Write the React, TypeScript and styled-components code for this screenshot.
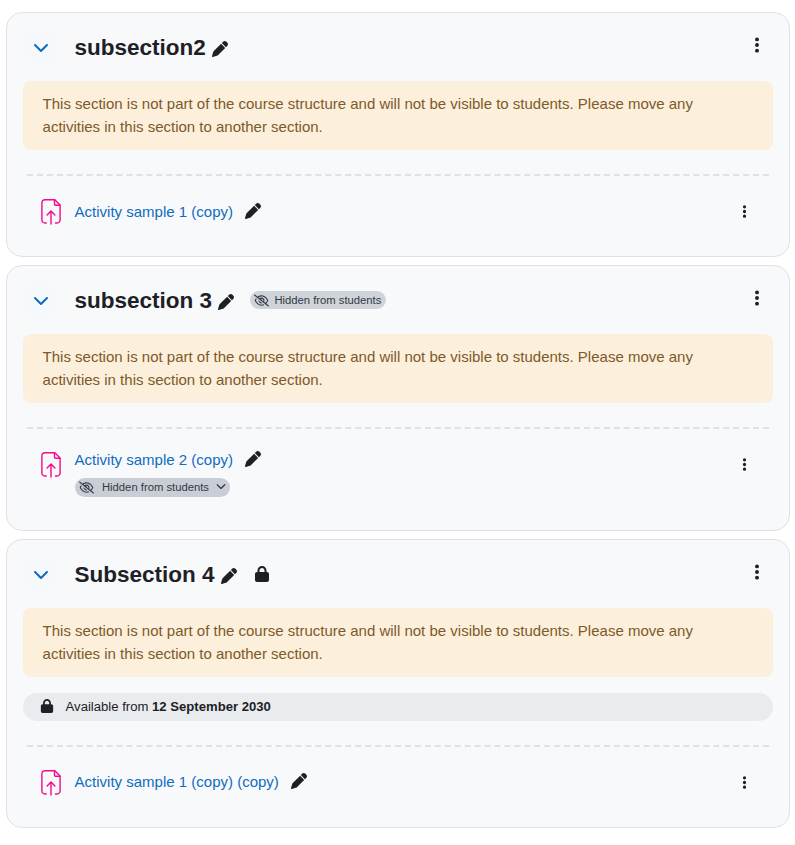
import React from "react";
import styled, { createGlobalStyle } from "styled-components";
import {
  FaChevronDown,
  FaEllipsisVertical,
  FaLock,
  FaPen,
  FaRegEyeSlash,
} from "react-icons/fa6";

const GlobalStyle = createGlobalStyle`
  *, *::before, *::after { box-sizing: border-box; }
  body {
    margin: 0;
    background: #fff;
    color: #1d2125;
    font: 15px/1.5 "Liberation Sans", Arial, sans-serif;
  }
  svg { display: block; flex: none; }
`;

const Page = styled.main`
  display: flex;
  flex-direction: column;
  gap: 8px;
  padding: 12px 5px 0 6px;
`;

const Card = styled.section<{ $height: number }>`
  height: ${(p) => p.$height}px;
  padding: 16px;
  border: 1px solid #dee2e6;
  border-radius: 16px;
  background: #f8f9fb;
`;

const Header = styled.header`
  display: flex;
  align-items: center;
  height: 36px;
`;

const Toggle = styled.button`
  display: flex;
  align-items: center;
  justify-content: center;
  width: 35px;
  height: 35px;
  padding: 0 0 1px;
  border: 0;
  border-radius: 50%;
  background: #f5f9fc;
  color: #0f6cbf;
`;

const Title = styled.h3`
  margin: 0 0 0 16.5px;
  font-size: 22.5px;
  font-weight: 700;
  line-height: 27px;
  white-space: nowrap;
`;

const EditButton = styled.button<{ $gap: number; $drop: number }>`
  display: flex;
  margin: ${(p) => p.$drop}px 0 0 ${(p) => p.$gap}px;
  padding: 0;
  border: 0;
  background: none;
  color: #1d2125;
`;

const MenuButton = styled.button<{ $right: number; $lift: number }>`
  display: flex;
  margin: 0 ${(p) => p.$right}px ${(p) => p.$lift}px auto;
  padding: 0;
  border: 0;
  background: none;
  color: #1d2125;
`;

const LockMark = styled.span`
  display: flex;
  margin: 0 0 0 17px;
`;

const Badge = styled.span`
  display: flex;
  align-items: center;
  gap: 5px;
  width: 136px;
  height: 18px;
  margin-left: 15.6px;
  padding-left: 4.8px;
  border-radius: 9px;
  background: #ced4da;
  color: #343a40;
  font-size: 11.25px;
  line-height: 18px;
  white-space: nowrap;
`;

const VisibilityButton = styled.button`
  display: flex;
  align-items: center;
  width: 155px;
  height: 19px;
  padding: 0 4px 0 4.4px;
  border: 0;
  border-radius: 10px;
  background: #c8cdd6;
  color: #343a40;
  font: 11.25px/19px "Liberation Sans", Arial, sans-serif;
  white-space: nowrap;
`;

const VisibilityLabel = styled.span`
  margin: 0 7px 0 8px;
`;

const VisibilityCaret = styled(FaChevronDown)`
  margin-bottom: 3px;
`;

const Warning = styled.p`
  margin: 16px 0 0;
  padding: 12px 19.6px;
  border-radius: 8px;
  background: #fcefdc;
  color: #7d5a29;
`;

const Availability = styled.div`
  display: flex;
  align-items: center;
  gap: 11.8px;
  height: 28px;
  margin-top: 16px;
  padding-left: 16.8px;
  border-radius: 14px;
  background: #e9ecef;
  font-size: 13.125px;
`;

const AvailabilityLock = styled(FaLock)`
  margin-bottom: 2px;
`;

const Divider = styled.hr`
  height: 0;
  margin: 24px 4px 0;
  border: 0;
  border-top: 2px dashed #dee2e6;
`;

const Activity = styled.div`
  display: flex;
  align-items: flex-start;
  margin-top: 16px;
  padding: 0 25px 0 16px;
`;

const ActivityMark = styled.div`
  display: flex;
  align-items: center;
  height: 40px;
`;

const ActivityMenu = styled(ActivityMark)`
  margin-left: auto;
`;

const ActivityBody = styled.div<{ $top: number }>`
  display: flex;
  flex-direction: column;
  gap: 6px;
  padding-top: ${(p) => p.$top}px;
  margin-left: 11.6px;
`;

const NameRow = styled.div`
  display: flex;
  align-items: center;
  height: 23px;
`;

const ActivityLink = styled.a`
  color: #0f6cbf;
  text-decoration: none;
  white-space: nowrap;
`;

const AssignmentIcon = () => (
  <svg width="24" height="28" viewBox="0 0 24 28" fill="none" stroke="#f7088b" strokeWidth="1.4" strokeLinecap="round" strokeLinejoin="round">
    <path d="M7.2 25H5.9A3 3 0 0 1 2.9 22V4.7A3 3 0 0 1 5.9 1.7H15.8L21.1 6.9V22A3 3 0 0 1 18.1 25H16.5" />
    <path d="M15.5 1.9V6.1A1.2 1.2 0 0 0 16.7 7.3H20.8M12 26V13.2M8.1 16.9L12 13L15.9 16.9" />
  </svg>
);

type SectionProps = {
  title: string;
  activity: string;
  height: number;
  bodyTop: number;
  hidden?: boolean;
  locked?: boolean;
  date?: string;
  hiddenActivity?: boolean;
};

function Section({ title, activity, height, bodyTop, hidden, locked, date, hiddenActivity }: SectionProps) {
  return (
    <Card $height={height}>
      <Header>
        <Toggle aria-label={`Collapse ${title}`}><FaChevronDown size={16} /></Toggle>
        <Title>{title}</Title>
        <EditButton $gap={6} $drop={3} aria-label="Edit title"><FaPen size={16} /></EditButton>
        {hidden && <Badge><FaRegEyeSlash size={15} />Hidden from students</Badge>}
        {locked && <LockMark><FaLock size={16} /></LockMark>}
        <MenuButton $right={7.5} $lift={4} aria-label="Section actions"><FaEllipsisVertical size={18} /></MenuButton>
      </Header>
      <Warning>
        This section is not part of the course structure and will not be visible to students. Please move any activities in this section to another section.
      </Warning>
      {date && (
        <Availability>
          <AvailabilityLock size={14} />
          <span>Available from <strong>{date}</strong></span>
        </Availability>
      )}
      <Divider />
      <Activity>
        <ActivityMark><AssignmentIcon /></ActivityMark>
        <ActivityBody $top={bodyTop}>
          <NameRow>
            <ActivityLink>{activity}</ActivityLink>
            <EditButton $gap={12.4} $drop={-4} aria-label="Edit activity title"><FaPen size={16} /></EditButton>
          </NameRow>
          {hiddenActivity && (
            <VisibilityButton>
              <FaRegEyeSlash size={15} />
              <VisibilityLabel>Hidden from students</VisibilityLabel>
              <VisibilityCaret size={10} />
            </VisibilityButton>
          )}
        </ActivityBody>
        <ActivityMenu>
          <MenuButton $right={-4} $lift={1} aria-label="Activity actions"><FaEllipsisVertical size={15} /></MenuButton>
        </ActivityMenu>
      </Activity>
    </Card>
  );
}

export default function App() {
  return (
    <>
      <GlobalStyle />
      <Page>
        <Section title="subsection2" activity="Activity sample 1 (copy)" height={245} bodyTop={9} />
        <Section title="subsection 3" activity="Activity sample 2 (copy)" height={266} bodyTop={4} hidden hiddenActivity />
        <Section title="Subsection 4" activity="Activity sample 1 (copy) (copy)" height={289} bodyTop={8} locked date="12 September 2030" />
      </Page>
    </>
  );
}
